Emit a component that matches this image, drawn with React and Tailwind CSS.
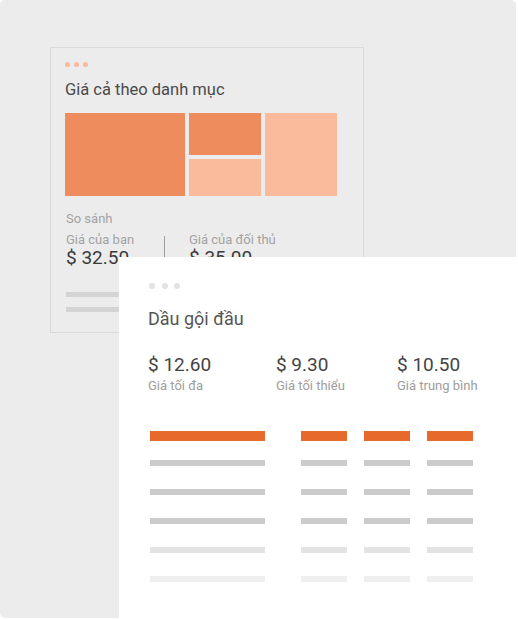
const font = { fontFamily: 'Roboto, "Noto Sans", sans-serif' };

function Dots({ color, size, gap }) {
  return (
    <div className={`flex ${gap}`}>
      {[0, 1, 2].map(i => (
        <span key={i} className={`rounded-full ${size} ${color}`} />
      ))}
    </div>
  );
}

const rows = [
  'bg-[#cbcbcb]',
  'bg-[#cbcbcb]',
  'bg-[#cbcbcb]',
  'bg-[#e3e3e3]',
  'bg-[#efefef]',
];

function BarRow({ color, h }) {
  return (
    <div className="flex">
      <div className={`w-[115px] ${h} ${color}`} />
      <div className={`ml-[36px] w-[46px] ${h} ${color}`} />
      <div className={`ml-[17px] w-[46px] ${h} ${color}`} />
      <div className={`ml-[17px] w-[46px] ${h} ${color}`} />
    </div>
  );
}

export default function App() {
  return (
    <div className="relative w-[518px] h-[619px] bg-white overflow-hidden" style={font}>
      <div className="w-[516px] h-[618px] rounded-[5px] bg-[#ececec] pt-[47px] pl-[50px]">
        {/* back card */}
        <div className="w-[314px] h-[286px] border border-[#d9d9d9] pt-[14px] pl-[14px]">
          <Dots color="bg-[#f9bb9c]" size="w-[5px] h-[5px]" gap="gap-[4px]" />
          <div className="mt-[11px] text-[16.5px] leading-[24px] text-[#4a4a4a]">Giá cả theo danh mục</div>
          <div className="mt-[11px] grid grid-cols-[120px_72px_72px] grid-rows-[42px_37px] gap-[4px]">
            <div className="row-span-2 bg-[#ee8c5e]" />
            <div className="bg-[#ee8c5e]" />
            <div className="row-span-2 bg-[#f9bb9c]" />
            <div className="bg-[#f9bb9c]" />
          </div>
          <div className="mt-[14px] pl-[1px] text-[13px] leading-[18px] text-[#a3a3a3]">So sánh</div>
          <div className="mt-[4px] flex pl-[1px]">
            <div className="w-[98px]">
              <div className="text-[13px] leading-[16px] text-[#a3a3a3]">Giá của bạn</div>
              <div className="text-[19px] leading-[20px] text-[#3a3a3a]">$ 32.50</div>
            </div>
            <div className="border-l border-[#9e9e9e] pl-[24px] h-[40px] mt-[4px]">
              <div className="-mt-[4px] text-[13px] leading-[16px] text-[#a3a3a3]">Giá của đối thủ</div>
              <div className="text-[19px] leading-[20px] text-[#3a3a3a]">$ 35.00</div>
            </div>
          </div>
          <div className="mt-[16px] ml-[1px] w-[200px] h-[5px] bg-[#d4d4d4]" />
          <div className="mt-[10px] ml-[1px] w-[200px] h-[5px] bg-[#d4d4d4]" />
        </div>
      </div>

      {/* front card */}
      <div className="absolute left-[119px] top-[257px] right-0 bottom-0 bg-white pt-[26px] pl-[29px]">
        <div className="pl-[1px]">
          <Dots color="bg-[#e3e3e3]" size="w-[6px] h-[6px]" gap="gap-[6.5px]" />
        </div>
        <div className="mt-[18px] text-[18px] leading-[24px] text-[#555555]">Dầu gội đầu</div>
        <div className="mt-[22px] flex">
          {[
            ['$ 12.60', 'Giá tối đa', 'w-[129px]'],
            ['$ 9.30', 'Giá tối thiểu', 'w-[122px]'],
            ['$ 10.50', 'Giá trung bình', 'w-[122px]'],
          ].map(([v, l, w]) => (
            <div key={l} className={w}>
              <div className="text-[19px] leading-[24px] text-[#444444]">{v}</div>
              <div className="text-[13px] leading-[18px] text-[#9d9d9d]">{l}</div>
            </div>
          ))}
        </div>
        <div className="mt-[36px] ml-[2px] flex flex-col">
          <BarRow color="bg-[#e66a2c]" h="h-[10px]" />
          <div className="mt-[19px] flex flex-col gap-[23px]">
            {rows.map((c, i) => (
              <BarRow key={i} color={c} h="h-[6px]" />
            ))}
          </div>
        </div>
      </div>
    </div>
  );
}
